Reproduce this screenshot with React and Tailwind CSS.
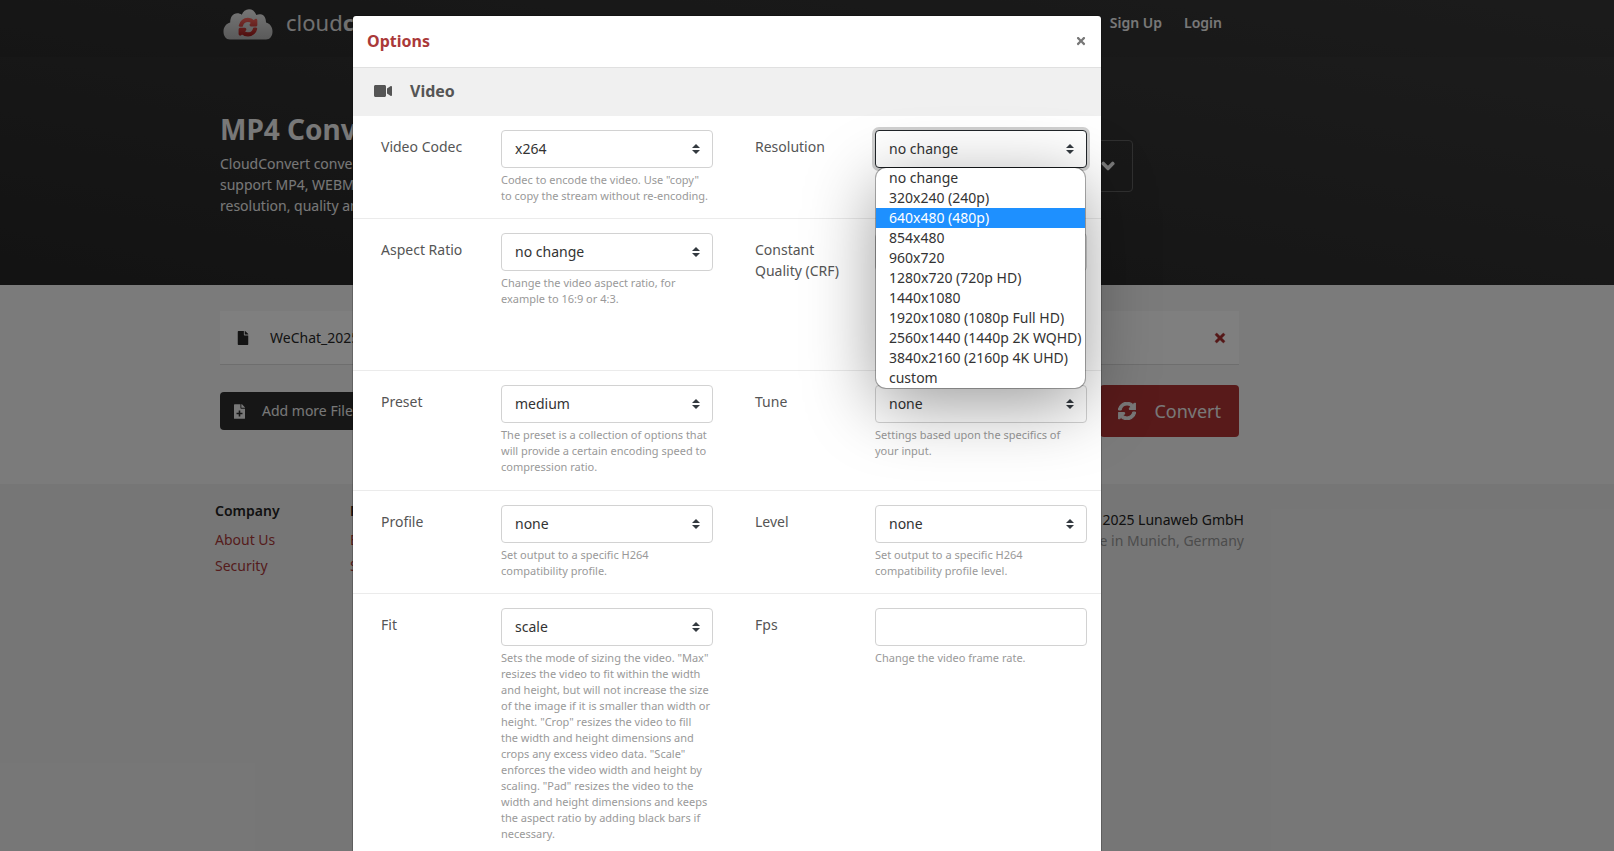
import { FaVideo, FaFile, FaTimes, FaChevronDown, FaSyncAlt } from "react-icons/fa";

const resolutions = [
  "no change",
  "320x240 (240p)",
  "640x480 (480p)",
  "854x480",
  "960x720",
  "1280x720 (720p HD)",
  "1440x1080",
  "1920x1080 (1080p Full HD)",
  "2560x1440 (1440p 2K WQHD)",
  "3840x2160 (2160p 4K UHD)",
  "custom",
];

const rows = [
  [
    {
      id: "video_codec",
      label: "Video Codec",
      value: "x264",
      help: 'Codec to encode the video. Use "copy"\nto copy the stream without re-encoding.',
    },
    { id: "resolution", label: "Resolution", value: "no change", options: resolutions, active: "640x480 (480p)" },
  ],
  [
    {
      id: "aspect_ratio",
      label: "Aspect Ratio",
      value: "no change",
      help: "Change the video aspect ratio, for\nexample to 16:9 or 4:3.",
    },
    { id: "crf", label: "Constant Quality (CRF)", input: true },
  ],
  [
    {
      id: "preset",
      label: "Preset",
      value: "medium",
      help: "The preset is a collection of options that\nwill provide a certain encoding speed to\ncompression ratio.",
    },
    { id: "tune", label: "Tune", value: "none", help: "Settings based upon the specifics of\nyour input." },
  ],
  [
    { id: "profile", label: "Profile", value: "none", help: "Set output to a specific H264\ncompatibility profile." },
    { id: "level", label: "Level", value: "none", help: "Set output to a specific H264\ncompatibility profile level." },
  ],
  [
    {
      id: "fit",
      label: "Fit",
      value: "scale",
      help: `Sets the mode of sizing the video. "Max"
resizes the video to fit within the width
and height, but will not increase the size
of the image if it is smaller than width or
height. "Crop" resizes the video to fill
the width and height dimensions and
crops any excess video data. "Scale"
enforces the video width and height by
scaling. "Pad" resizes the video to the
width and height dimensions and keeps
the aspect ratio by adding black bars if
necessary.`,
    },
    { id: "fps", label: "Fps", input: true, help: "Change the video frame rate." },
  ],
];

const rowHeights = ["min-h-[103px]", "min-h-[152px]", "min-h-[120px]", "min-h-[103px]", "min-h-[103px]"];

const Logo = () => (
  <svg className="h-[31px] w-[50px]" viewBox="0 0 50 31">
    <defs>
      <linearGradient id="cloud" x1="0" y1="0" x2="0" y2="1">
        <stop offset="0" stopColor="#ececec" />
        <stop offset="1" stopColor="#b4b4b4" />
      </linearGradient>
      <linearGradient id="arrows" x1="0" y1="0" x2="0" y2="1">
        <stop offset="0" stopColor="#f2625a" />
        <stop offset="1" stopColor="#a01c1c" />
      </linearGradient>
    </defs>
    <path
      fill="url(#cloud)"
      d="M7 30.500C3 30.500 0.500 27 0.500 22.500C0.500 18 3.300 14.500 7.200 13.500C7.200 8 10 4.300 14.300 4.300C16 4.300 17.500 4.800 18.800 5.800C20 2.500 22.500 0.300 26 0.300C29.500 0.300 32 2.500 33.300 6C34.500 5.400 36 5.200 37.500 5.300C41 5.600 43 9 43 13.500C47 14.500 49.500 18 49.500 22.500C49.500 27 47 30.500 43 30.500Z"
    />
    <g
      fill="url(#arrows)"
      stroke="url(#arrows)"
      strokeWidth="40"
      transform="translate(16 9.200) scale(0.035)"
    >
      <path d="M370.720 133.280C339.458 104.008 298.888 87.962 255.848 88c-77.458.068-144.328 53.178-162.791 126.850-1.344 5.363-6.122 9.150-11.651 9.150H24.103c-7.498 0-13.194-6.807-11.807-14.176C33.933 94.924 134.813 8 256 8c66.448 0 126.791 26.136 171.315 68.685L463.030 40.970C478.149 25.851 504 36.559 504 57.941V192c0 13.255-10.745 24-24 24H345.941c-21.382 0-32.090-25.851-16.971-40.971l41.750-41.749zM32 296h134.059c21.382 0 32.090 25.851 16.971 40.971l-41.750 41.750c31.262 29.273 71.835 45.319 114.876 45.280 77.418-.070 144.315-53.144 162.787-126.849 1.344-5.363 6.122-9.150 11.651-9.150h57.304c7.498 0 13.194 6.807 11.807 14.176C478.067 417.076 377.187 504 256 504c-66.448 0-126.791-26.136-171.315-68.685L48.970 471.030C33.851 486.149 8 475.441 8 454.059V320c0-13.255 10.745-24 24-24z" />
    </g>
  </svg>
);

const FilePlus = () => (
  <svg className="h-[15px] w-[11px]" viewBox="0 0 384 512" fill="currentColor">
    <path
      fillRule="evenodd"
      d="M224 136V0H24C10.700 0 0 10.700 0 24v464c0 13.300 10.700 24 24 24h336c13.300 0 24-10.700 24-24V160H248c-13.200 0-24-10.800-24-24zm160-14.100v6.100H256V0h6.100c6.400 0 12.500 2.500 17 7l97.900 98c4.500 4.500 7 10.600 7 16.900zM164 220h56v76h76v56h-76v76h-56v-76H88v-56h76z"
    />
  </svg>
);

const SortArrows = () => (
  <svg className="pointer-events-none absolute top-1/2 right-[13px] h-[10px] w-2 -translate-y-1/2" viewBox="0 0 8 10">
    <path fill="#343a40" d="M4 0L0 4h8zM4 10L0 6h8z" />
  </svg>
);

const OptionList = ({ options, active }) => (
  <ul className="absolute top-full right-0.5 left-px z-10 overflow-hidden rounded-[10px] bg-white shadow-[0_0_0_1px_rgba(0,0,0,0.3),0_16px_70px_rgba(0,0,0,0.4)]">
    {options.map((option) => (
      <li
        key={option}
        className={`h-5 pl-[13px] text-sm leading-5 whitespace-nowrap ${
          option === active ? "bg-[#1e90ff] text-white" : "text-[#333333]"
        }`}
      >
        {option}
      </li>
    ))}
  </ul>
);

const Field = ({ id, label, value, help, input, options, active }) => {
  const border = options ? "border-[#212529] ring-3 ring-[#d0d0d0]" : "border-[#d2d2d2]";

  return (
    <div className="flex">
      <label htmlFor={id} className="w-[120px] shrink-0 pt-[6px] pr-7 text-sm leading-[21px] text-[#555555]">
        {label}
      </label>
      <div className="min-w-0 flex-1">
        <div className="relative">
          {input ? (
            <input id={id} type="text" className={`h-[38px] w-full rounded border bg-white px-[13px] text-sm ${border}`} />
          ) : (
            <>
              <select
                id={id}
                defaultValue={value}
                className={`h-[38px] w-full appearance-none rounded border bg-white px-[13px] text-sm text-[#333333] outline-none ${border}`}
              >
                {(options || [value]).map((option) => (
                  <option key={option}>{option}</option>
                ))}
              </select>
              <SortArrows />
            </>
          )}
          {options && <OptionList options={options} active={active} />}
        </div>
        {help && <p className="mt-1 text-[11px] leading-4 whitespace-pre-line text-[#999999]">{help}</p>}
      </div>
    </div>
  );
};

const Hero = () => (
  <div className="h-[285px] bg-linear-to-tr from-[#262626] to-[#3a3a3a] text-[#f0f0f0]">
    <div className="h-[57px] bg-black/5 pr-[155px]">
      <header className="mx-auto flex max-w-[1019px] items-start px-[3px] pt-[9px]">
        <a href="#home" className="flex items-start gap-[13px]">
          <Logo />
          <span className="text-[22px] leading-[26px] text-[#e0e0e0]">
            cloud<b>c</b>
          </span>
        </a>
        <nav className="ml-auto flex gap-[22px] pt-1 pr-[14px] text-sm font-semibold">
          <a href="#signup">Sign Up</a>
          <a href="#login">Login</a>
        </nav>
      </header>
    </div>
    <div className="pr-[155px]">
      <div className="mx-auto flex max-w-[1019px] justify-between">
        <div className="pt-[54px]">
          <h1 className="text-[28px] leading-9 font-bold">MP4 Conv</h1>
          <p className="mt-[6px] text-sm leading-[21px]">
            CloudConvert conve
            <br />
            support MP4, WEBM
            <br />
            resolution, quality an
          </p>
        </div>
        <div className="pt-[83px] pr-[106px]">
          <button
            aria-label="Format"
            className="flex h-[52px] w-20 items-center justify-end rounded border border-[#606060] pr-[17px]"
          >
            <FaChevronDown className="text-sm" strokeWidth={50} />
          </button>
        </div>
      </div>
    </div>
  </div>
);

const Files = () => (
  <main className="h-[199px] bg-[#f7f7f7] pt-[26px] pr-[155px] text-[#282828]">
    <div className="mx-auto max-w-[1019px]">
      <div className="flex h-[54px] items-center border-b border-[#dcdcdc] bg-white pr-3 pl-4">
        <FaFile className="mr-5 text-sm" />
        <span>WeChat_2025</span>
        <button aria-label="Remove" className="ml-auto text-[#aa2f2f]">
          <FaTimes className="text-sm" strokeWidth={16} />
        </button>
      </div>
      <div className="mt-5 flex items-center justify-between">
        <button className="flex h-[38px] w-[200px] items-center gap-[17px] rounded bg-[#2c2c2c] px-[14px] text-[#f0f0f0]">
          <FilePlus />
          Add more File
        </button>
        <button className="flex h-[52px] items-center gap-[18px] rounded bg-[#b03434] px-[18px] text-lg text-[#f0f0f0]">
          <FaSyncAlt strokeWidth={30} />
          Convert
        </button>
      </div>
    </div>
  </main>
);

const Footer = () => (
  <footer className="pt-4 pr-[155px]">
    <div className="mx-auto flex max-w-[1029px] leading-[21px]">
      <div className="w-[135px]">
        <h4 className="mb-2 font-semibold text-[#222]">Company</h4>
        <ul className="space-y-[5px] text-[#aa3939]">
          <li>
            <a href="#about">About Us</a>
          </li>
          <li>
            <a href="#security">Security</a>
          </li>
        </ul>
      </div>
      <div>
        <h4 className="mb-2 font-semibold text-[#222]">R</h4>
        <ul className="space-y-[5px] text-[#aa3939]">
          <li>
            <a href="#blog">B</a>
          </li>
          <li>
            <a href="#status">S</a>
          </li>
        </ul>
      </div>
      <div className="ml-auto pt-[9px] text-right">
        <p className="text-[#222]">2025 Lunaweb GmbH</p>
        <p className="text-[#999]">e in Munich, Germany</p>
      </div>
    </div>
  </footer>
);

const OptionsDialog = () => (
  <div
    role="dialog"
    aria-label="Options"
    className="mx-auto w-full max-w-[748px] rounded-[3px] bg-white ring-1 ring-black/20"
  >
    <div className="flex h-[52px] items-start justify-between border-b border-[#e0e0e0] px-[14px] pt-[13px]">
      <h2 className="text-base leading-6 font-bold text-[#aa3939]">Options</h2>
      <button aria-label="Close" className="flex h-6 items-center text-[#777]">
        <FaTimes className="text-xs" />
      </button>
    </div>
    <div className="flex h-12 items-center bg-[#f0f0f0] px-[21px] pb-0.5 text-[#555555]">
      <FaVideo className="mr-[18px] text-lg" />
      <h3 className="text-base font-bold">Video</h3>
    </div>
    {rows.map((row, i) => (
      <div
        key={row[0].id}
        className={`grid grid-cols-2 gap-[42px] border-b border-[#ebebeb] py-[14px] pr-[14px] pl-7 ${rowHeights[i]}`}
      >
        {row.map((field) => (
          <Field key={field.id} {...field} />
        ))}
      </div>
    ))}
  </div>
);

const App = () => (
  <div className="relative h-screen overflow-hidden bg-[#ededed] font-['Noto_Sans',sans-serif] text-sm">
    <Hero />
    <Files />
    <Footer />
    <div className="absolute inset-0 overflow-hidden bg-black/50 pt-4 pr-40">
      <OptionsDialog />
    </div>
  </div>
);

export default App;
